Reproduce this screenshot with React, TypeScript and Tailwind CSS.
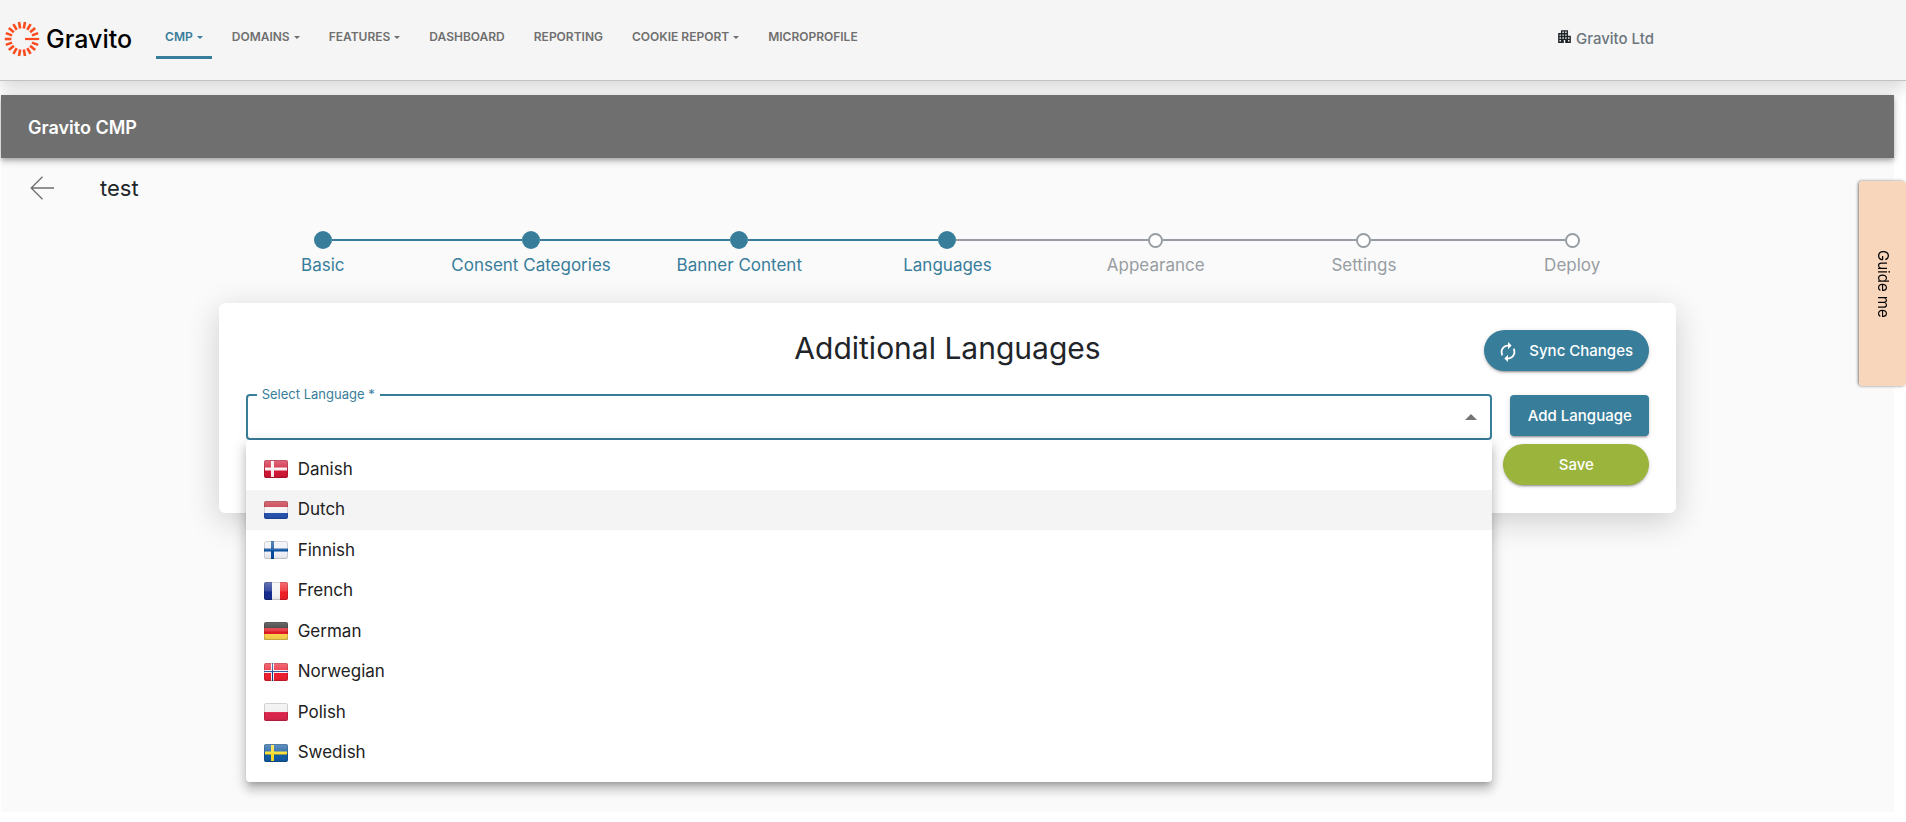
import { useState } from "react";
import type { ReactNode } from "react";
import { MdApartment, MdAutorenew } from "react-icons/md";

type NavItem = { label: string; menu?: boolean; active?: boolean };

const NAV: NavItem[] = [
  { label: "CMP", menu: true, active: true },
  { label: "DOMAINS", menu: true },
  { label: "FEATURES", menu: true },
  { label: "DASHBOARD" },
  { label: "REPORTING" },
  { label: "COOKIE REPORT", menu: true },
  { label: "MICROPROFILE" },
];

const STEPS = ["Basic", "Consent Categories", "Banner Content", "Languages", "Appearance", "Settings", "Deploy"];
const CURRENT_STEP = 3;

const FLAGS: Record<string, ReactNode> = {
  Danish: (
    <>
      <rect width="24" height="18" fill="#cf1533" />
      <path d="M1 9h22M8.500 1v16" stroke="#fbeef0" strokeWidth="3" />
    </>
  ),
  Dutch: (
    <>
      <rect width="24" height="18" fill="#f4f4f4" />
      <rect width="24" height="6" fill="#bf1f2f" />
      <rect y="12" width="24" height="6" fill="#2350ad" />
    </>
  ),
  Finnish: (
    <>
      <rect width="24" height="18" fill="#eef0f6" />
      <path d="M0 9h24M8.500 0v18" stroke="#00489c" strokeWidth="3" />
    </>
  ),
  French: (
    <>
      <rect width="24" height="18" fill="#f4f4f4" />
      <rect width="8" height="18" fill="#12298f" />
      <rect x="16" width="8" height="18" fill="#ee1c25" />
    </>
  ),
  German: (
    <>
      <rect width="24" height="18" fill="#1c1c1c" />
      <rect y="6" width="24" height="6" fill="#e01a22" />
      <rect y="12" width="24" height="6" fill="#fbd04a" />
    </>
  ),
  Norwegian: (
    <>
      <rect width="24" height="18" fill="#ec1c2e" />
      <path d="M0 8.500h24M8.500 0v18" stroke="#f6f2f6" strokeWidth="3" />
      <path d="M0 8.500h24M8.500 0v18" stroke="#0c3a86" strokeWidth="1" />
    </>
  ),
  Polish: (
    <>
      <rect width="24" height="18" fill="#eeeeee" />
      <rect y="9" width="24" height="9" fill="#d9234a" />
    </>
  ),
  Swedish: (
    <>
      <rect width="24" height="18" fill="#0f58a0" />
      <path d="M1 9h22M8.500 1v16" stroke="#fddb21" strokeWidth="3" />
    </>
  ),
};

function Flag({ name }: { name: string }) {
  return (
    <svg viewBox="0 0 24 18" className="h-[18px] w-6 shrink-0" aria-hidden="true">
      <defs>
        <clipPath id={`clip-${name}`}>
          <rect width="24" height="18" rx="2" />
        </clipPath>
        <linearGradient id={`shine-${name}`} x1="0" y1="0" x2="0" y2="1">
          <stop offset="0" stopColor="#fff" stopOpacity="0.36" />
          <stop offset="0.5" stopColor="#fff" stopOpacity="0.16" />
          <stop offset="0.55" stopColor="#fff" stopOpacity="0" />
          <stop offset="1" stopColor="#000" stopOpacity="0.08" />
        </linearGradient>
      </defs>
      <g clipPath={`url(#clip-${name})`}>
        {FLAGS[name]}
        <rect width="24" height="18" fill={`url(#shine-${name})`} />
        <rect x="0.500" y="0.500" width="23" height="17" rx="1.500" fill="none" stroke="#000" strokeOpacity="0.14" />
      </g>
    </svg>
  );
}

const RAYS = Array.from({ length: 17 }, (_, i) => (i + 1) * 20);

function Logo() {
  return (
    <a href="#home" className="flex items-center gap-[6px]">
      <svg viewBox="-18 -18 36 36" className="size-9" aria-hidden="true">
        <g stroke="#fb4b1f" strokeWidth="2.600">
          {RAYS.map((angle) => (
            <path key={angle} d="M10.600 0H17.200" transform={`rotate(${angle})`} />
          ))}
          <path d="M3 0H17.200" strokeWidth="2.200" />
        </g>
      </svg>
      <span className="text-[25px] leading-9 font-medium text-black">Gravito</span>
    </a>
  );
}

function Header() {
  return (
    <header className="relative z-10 flex h-[81px] items-start border-b border-[#c2c2c2] bg-[#f5f5f5] pl-1 shadow-[0_8px_16px_rgba(0,0,0,0.15)]">
      <div className="pt-[21px]">
        <Logo />
      </div>
      <nav className="ml-6 flex gap-[11px] pt-[14px]">
        {NAV.map((item) => (
          <a
            key={item.label}
            href={`#${item.label.toLowerCase().replace(" ", "-")}`}
            className={`flex h-[45px] items-center gap-1 border-b-[3px] px-[9px] pt-1 text-xs font-semibold ${
              item.active ? "border-[#387d9a] text-[#387d9a]" : "border-transparent text-[#6f6f6f]"
            }`}
          >
            {item.label}
            {item.menu && (
              <svg viewBox="0 0 6 3" className="h-[3px] w-[6px]" aria-hidden="true">
                <path d="M0 0h6L3 3z" fill="currentColor" />
              </svg>
            )}
          </a>
        ))}
      </nav>
      <div className="mr-[252px] ml-auto flex items-center gap-[3px] pt-[27px]">
        <MdApartment className="mb-[5px] size-[17px] text-[#212529]" aria-hidden="true" />
        <span className="text-[15px] leading-6 font-medium text-[#6c757d]">Gravito Ltd</span>
      </div>
    </header>
  );
}

function Stepper() {
  return (
    <ol className="grid grid-cols-7">
      {STEPS.map((step, i) => {
        const done = i <= CURRENT_STEP;
        const leftLine = i === 0 ? "bg-transparent" : done ? "bg-[#387d9a]" : "bg-[#979da2]";
        const rightLine =
          i === STEPS.length - 1 ? "bg-transparent" : i < CURRENT_STEP ? "bg-[#387d9a]" : "bg-[#979da2]";
        return (
          <li key={step} className="flex flex-col items-center gap-px" aria-current={i === CURRENT_STEP ? "step" : undefined}>
            <div className="flex h-5 w-full items-center">
              <span className={`h-[2px] flex-1 ${leftLine}`} />
              <span
                className={
                  done ? "size-[18px] rounded-full bg-[#387d9a]" : "size-[15px] rounded-full border-2 border-[#979da2] bg-white"
                }
              />
              <span className={`h-[2px] flex-1 ${rightLine}`} />
            </div>
            <a href={`#step-${i + 1}`} className={`text-[17px] leading-7 ${done ? "text-[#387d9a]" : "text-[#979da2]"}`}>
              {step}
            </a>
          </li>
        );
      })}
    </ol>
  );
}

function LanguageSelect() {
  const [open, setOpen] = useState(true);
  const [value, setValue] = useState("");
  return (
    <div className="relative min-w-0 flex-1">
      <label htmlFor="language" className="absolute -top-[9px] left-[11px] bg-white pr-[5px] pl-[5px] text-[13px] leading-[18px] text-[#387d9a]">
        Select Language *
      </label>
      <input
        id="language"
        role="combobox"
        aria-expanded={open}
        aria-controls="language-list"
        required
        readOnly
        value={value}
        onClick={() => setOpen(!open)}
        className="block h-[46px] w-full rounded-[4px] border-2 border-[#387d9a] bg-white px-4 text-[17px] text-[#212121] outline-none"
      />
      <svg viewBox="0 0 12 6" className="pointer-events-none absolute top-5 right-[15px] h-[6px] w-3" aria-hidden="true">
        <path d="M0 6h12L6 0z" fill="#757575" />
      </svg>
      {open && (
        <ul
          id="language-list"
          role="listbox"
          className="absolute top-full left-0 z-20 flex h-[342px] w-full flex-col rounded-[4px] bg-white py-[9px] shadow-[0_5px_5px_-3px_rgba(0,0,0,0.2),0_8px_10px_1px_rgba(0,0,0,0.14),0_3px_14px_2px_rgba(0,0,0,0.12)]"
        >
          {Object.keys(FLAGS).map((name) => (
            <li
              key={name}
              role="option"
              aria-selected={value === name}
              onClick={() => {
                setValue(name);
                setOpen(false);
              }}
              className={`flex flex-1 cursor-pointer items-center gap-[10px] px-[18px] text-[17px] text-[#212121] hover:bg-[#f4f4f4] ${
                name === "Dutch" ? "bg-[#f4f4f4]" : ""
              }`}
            >
              <Flag name={name} />
              {name}
            </li>
          ))}
        </ul>
      )}
    </div>
  );
}

const BUTTON =
  "h-[41px] pt-[2px] text-[15px] font-medium text-white shadow-[0_3px_1px_-2px_rgba(0,0,0,0.2),0_2px_2px_rgba(0,0,0,0.14),0_1px_5px_rgba(0,0,0,0.12)]";

function LanguageCard() {
  return (
    <section className="mt-6 rounded-[6px] bg-white px-[27px] pt-[27px] pb-7 shadow-[0_8px_32px_rgba(0,0,0,0.18)]">
      <div className="grid grid-cols-[1fr_auto_1fr] items-start">
        <h1 className="col-start-2 text-[30px] leading-9 text-[#212529]">Additional Languages</h1>
        <button type="button" className={`flex w-[165px] items-center gap-[10px] justify-self-end rounded-full pl-[13px] ${BUTTON} bg-[#387d9a]`}>
          <MdAutorenew className="size-[22px]" aria-hidden="true" />
          Sync Changes
        </button>
      </div>
      <div className="mt-[23px] flex gap-[18px]">
        <LanguageSelect />
        <button type="button" className={`mt-px w-[139px] rounded-[4px] ${BUTTON} bg-[#387d9a]`}>
          Add Language
        </button>
      </div>
      <div className="mt-1 flex justify-end">
        <button type="button" className={`w-[146px] rounded-full ${BUTTON} bg-[#9ab43c]`}>
          Save
        </button>
      </div>
    </section>
  );
}

export default function App() {
  return (
    <div className="flex min-h-screen flex-col bg-white pb-[10px] font-[Inter,sans-serif]">
      <Header />
      <div className="relative z-10 mt-[14px] mr-3 ml-px flex h-[63px] items-center bg-[#6f6f6f] px-[27px] pt-[2px] shadow-[0_2px_4px_-1px_rgba(0,0,0,0.2),0_4px_5px_rgba(0,0,0,0.14),0_1px_10px_rgba(0,0,0,0.12)]">
        <h2 className="text-lg font-semibold text-white">Gravito CMP</h2>
      </div>
      <main className="mr-3 ml-px flex-1 bg-[#fafafa]">
        <div className="flex h-[60px] items-center gap-[46px] pl-[29px]">
          <a href="#back" aria-label="Back">
            <svg viewBox="0 0 24 24" className="size-6" fill="none" stroke="#6f6f6f" strokeWidth="1.300" aria-hidden="true">
              <path d="M24 12H1.200M12.500 0.700L1.200 12L12.500 23.300" />
            </svg>
          </a>
          <span className="text-[22px] text-[#212529]">test</span>
        </div>
        <div className="mx-auto w-[77%] pt-3">
          <Stepper />
          <LanguageCard />
        </div>
      </main>
      <button
        type="button"
        className="fixed top-[181px] right-0 z-30 flex h-[205px] w-[47px] items-center justify-center rounded-[4px] bg-[#f7d1b5]/90 text-[15px] text-black shadow-[-1px_0_3px_rgba(0,0,0,0.5)] [writing-mode:vertical-rl]"
      >
        Guide me
      </button>
    </div>
  );
}
